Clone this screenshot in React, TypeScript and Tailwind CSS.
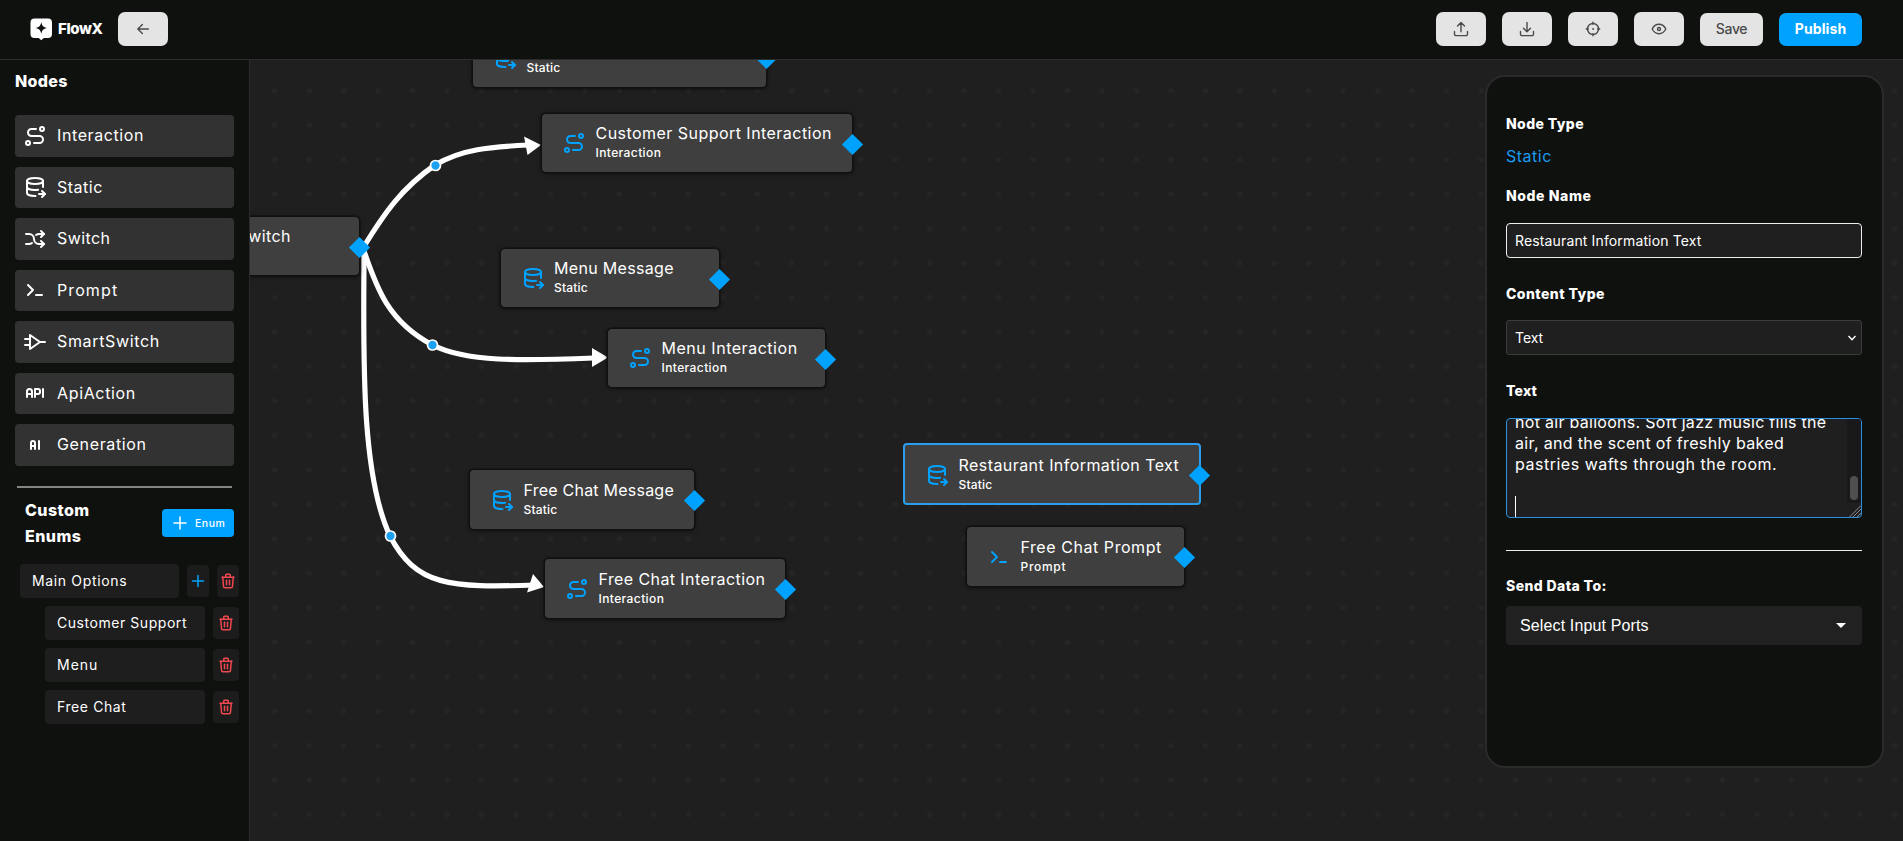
import type { ReactNode } from "react";
import type { IconType } from "react-icons";
import {
  TbAi,
  TbApi,
  TbArrowsShuffle,
  TbDatabaseExport,
  TbLogicBuffer,
  TbPrompt,
  TbRoute,
  TbTrash,
} from "react-icons/tb";

const palette: { label: string; icon: IconType; tracking: string }[] = [
  { label: "Interaction", icon: TbRoute, tracking: "tracking-[0.6px]" },
  { label: "Static", icon: TbDatabaseExport, tracking: "tracking-[0.5px]" },
  { label: "Switch", icon: TbArrowsShuffle, tracking: "tracking-[0.4px]" },
  { label: "Prompt", icon: TbPrompt, tracking: "tracking-[1.1px]" },
  { label: "SmartSwitch", icon: TbLogicBuffer, tracking: "tracking-[0.65px]" },
  { label: "ApiAction", icon: TbApi, tracking: "tracking-[0.65px]" },
  { label: "Generation", icon: TbAi, tracking: "tracking-[0.65px]" },
];

const enumOptions = [
  { label: "Customer Support", tracking: "tracking-[0.55px]" },
  { label: "Menu", tracking: "tracking-[1px]" },
  { label: "Free Chat", tracking: "tracking-[0.6px]" },
];

type FlowNode = {
  place: string;
  title: string;
  kind: string;
  icon: IconType;
  tracking: string;
  kindTracking: string;
  selected?: boolean;
};

const nodes: FlowNode[] = [
  { place: "left-[223px] -top-[32px] w-[293px]", title: "Customer Support Message", kind: "Static", icon: TbDatabaseExport, tracking: "tracking-[0.4px]", kindTracking: "tracking-[0.2px]" },
  { place: "left-[292px] top-[53.500px] w-[309.500px]", title: "Customer Support Interaction", kind: "Interaction", icon: TbRoute, tracking: "tracking-[0.46px]", kindTracking: "tracking-[0.4px]" },
  { place: "-left-[66px] top-[156.500px] w-[175px]", title: "Switch", kind: "", icon: TbArrowsShuffle, tracking: "tracking-[0.4px]", kindTracking: "" },
  { place: "left-[250.500px] top-[188.500px] w-[218px]", title: "Menu Message", kind: "Static", icon: TbDatabaseExport, tracking: "tracking-[0.32px]", kindTracking: "tracking-[0.2px]" },
  { place: "left-[358px] top-[268.500px] w-[217px]", title: "Menu Interaction", kind: "Interaction", icon: TbRoute, tracking: "tracking-[0.53px]", kindTracking: "tracking-[0.4px]" },
  { place: "left-[220px] top-[410px] w-[224px]", title: "Free Chat Message", kind: "Static", icon: TbDatabaseExport, tracking: "tracking-[0.23px]", kindTracking: "tracking-[0.2px]" },
  { place: "left-[295px] top-[499px] w-[240px]", title: "Free Chat Interaction", kind: "Interaction", icon: TbRoute, tracking: "tracking-[0.41px]", kindTracking: "tracking-[0.4px]" },
  { place: "left-[655px] top-[385px] w-[298px]", title: "Restaurant Information Text", kind: "Static", icon: TbDatabaseExport, tracking: "tracking-[0.44px]", kindTracking: "tracking-[0.2px]", selected: true },
  { place: "left-[717px] top-[467px] w-[217px]", title: "Free Chat Prompt", kind: "Prompt", icon: TbPrompt, tracking: "tracking-[0.56px]", kindTracking: "tracking-[0.7px]" },
];

function GlyphIcon({ children, size = 16 }: { children: ReactNode; size?: number }) {
  return (
    <svg width={size} height={size} viewBox="0 0 16 16" fill="none" stroke="currentColor" strokeWidth="1.4" strokeLinecap="round" strokeLinejoin="round">
      {children}
    </svg>
  );
}

function IconButton({ children }: { children: ReactNode }) {
  return (
    <button className="flex h-[34px] w-[50px] items-center justify-center rounded-[7px] bg-[#e4e4e4] text-[#4a4a4a]">
      {children}
    </button>
  );
}

function Header() {
  return (
    <header className="flex h-[60px] shrink-0 items-center border-b border-[#2c2c2c] bg-[#0f110f] pr-[41px] pl-[30px]">
      <svg width="23" height="23" viewBox="0 0 23 23">
        <path d="M4.5 0.5h13.5a4 4 0 0 1 4 4v11.5a4 4 0 0 1-4 4h-4.2L11.3 22.3 8.7 20H4.5a4 4 0 0 1-4-4V4.5a4 4 0 0 1 4-4Z" fill="#fff" />
        <path d="M11.300 4c.9 4.200 1.800 5.100 6 6-4.200.9-5.100 1.800-6 6-.9-4.200-1.800-5.100-6-6 4.200-.9 5.100-1.800 6-6Z" fill="#0f110f" />
      </svg>
      <span className="ml-[5px] w-[60px] text-[15px] font-extrabold tracking-[-0.4px] text-white">FlowX</span>
      <div className="-mt-[2px]">
        <IconButton>
          <GlyphIcon>
            <path d="M13.400 8H3M7.400 3.500 2.800 8l4.600 4.500" />
          </GlyphIcon>
        </IconButton>
      </div>
      <div className="-mt-[2px] ml-auto flex items-center gap-4">
        <IconButton>
          <GlyphIcon>
            <path d="M8 10.700V1.800M4.500 5 8 1.500 11.500 5M1.500 10.500v2.700a1.400 1.400 0 0 0 1.400 1.400h10.200a1.400 1.400 0 0 0 1.400-1.400v-2.700" />
          </GlyphIcon>
        </IconButton>
        <IconButton>
          <GlyphIcon>
            <path d="M8 1.500v9M4.500 7.200 8 10.700l3.500-3.500M1.500 10.500v2.700a1.400 1.400 0 0 0 1.400 1.400h10.200a1.400 1.400 0 0 0 1.400-1.400v-2.700" />
          </GlyphIcon>
        </IconButton>
        <IconButton>
          <GlyphIcon>
            <circle cx="8" cy="8" r="5.500" />
            <path d="M8 1.300v2M8 12.700v2M1.300 8h2M12.700 8h2" />
            <circle cx="8" cy="8" r="0.500" fill="currentColor" strokeWidth="0.800" />
          </GlyphIcon>
        </IconButton>
        <IconButton>
          <GlyphIcon>
            <path d="M1.200 8C2.700 5 5.200 3.300 8 3.300S13.300 5 14.800 8C13.300 11 10.800 12.700 8 12.700S2.700 11 1.200 8Z" />
            <circle cx="8" cy="8" r="1.500" />
          </GlyphIcon>
        </IconButton>
        <button className="mt-px flex h-[33px] w-[63px] items-center justify-center rounded-[7px] bg-[#e4e4e4] pb-px text-[14px] font-medium tracking-[-0.3px] text-[#4a4a4a]">
          Save
        </button>
        <button className="mt-px flex h-[33px] w-[83px] items-center justify-center rounded-[7px] bg-[#00a2ff] pb-px text-[14px] font-bold tracking-[0.1px] text-white">
          Publish
        </button>
      </div>
    </header>
  );
}

function DeleteButton({ width }: { width: "wide" | "narrow" }) {
  return (
    <button className={`flex h-8 items-center justify-center rounded bg-[#1c1c1c] text-[#f0484f] ${width === "wide" ? "w-[26px]" : "w-[22px]"}`}>
      <TbTrash size={18} />
    </button>
  );
}

function Sidebar() {
  return (
    <aside className="flex w-[250px] shrink-0 flex-col border-r border-[#2c2c2c] bg-[#0f110f] text-white">
      <h2 className="mt-[9px] ml-[15px] text-[16px] leading-6 font-extrabold tracking-[0.3px]">Nodes</h2>
      <div className="mt-[22px] ml-[15px] flex w-[219px] flex-col gap-[10px]">
        {palette.map(({ label, icon: Icon, tracking }) => (
          <div key={label} className="flex h-[41.500px] items-center rounded bg-[#323232] pl-2">
            <Icon size={24} />
            <span className={`-mt-px ml-[10px] text-[16px] ${tracking}`}>{label}</span>
          </div>
        ))}
      </div>
      <div className="mt-[20px] ml-[17px] h-[2px] w-[215px] bg-[#858585]" />
      <div className="mt-[9px] ml-[25px] flex w-[209px] items-center justify-between">
        <h2 className="w-[90px] text-[16px] leading-[26px] font-extrabold tracking-[0.45px]">Custom Enums</h2>
        <button className="mt-px flex h-7 w-[72px] items-center rounded bg-[#00a2ff] pl-[10px]">
          <svg width="16" height="16" viewBox="0 0 16 16" stroke="#fff" strokeWidth="1.500" strokeLinecap="round">
            <path d="M8 2v12M2 8h12" />
          </svg>
          <span className="mt-px ml-[7px] text-[10.500px] font-medium tracking-[0.5px]">Enum</span>
        </button>
      </div>
      <div className="mt-[15px] ml-5 flex items-center gap-2">
        <div className="flex h-[34px] w-[159px] items-center rounded bg-[#1e1e1e] pl-[12px] text-[14px] tracking-[0.65px]">Main Options</div>
        <button className="flex h-8 w-[22px] items-center justify-center rounded bg-[#1c1c1c]">
          <svg width="14" height="14" viewBox="0 0 14 14" stroke="#00a2ff" strokeWidth="1.500" strokeLinecap="round">
            <path d="M7 1.500v11M1.500 7h11" />
          </svg>
        </button>
        <DeleteButton width="narrow" />
      </div>
      <div className="mt-2 ml-[45px] flex flex-col gap-2">
        {enumOptions.map(({ label, tracking }) => (
          <div key={label} className="flex items-center gap-2">
            <div className={`flex h-[34px] w-[160px] items-center rounded bg-[#1e1e1e] pl-[12px] text-[14px] ${tracking}`}>{label}</div>
            <DeleteButton width="wide" />
          </div>
        ))}
      </div>
    </aside>
  );
}

function NodeCard({ node }: { node: FlowNode }) {
  const Icon = node.icon;
  return (
    <div
      className={`absolute flex items-center rounded-[4px] bg-[#3f3f3f] pl-5 ${node.place} ${
        node.selected ? "-translate-x-[2px] -translate-y-[2px] h-[62px] border-2 border-[#2a9df0]" : "h-[58.500px] shadow-[0_0_0_1.500px_#101010,0_1px_4px_1px_rgba(0,0,0,0.500)]"
      }`}
    >
      <Icon size={24} className="mt-px shrink-0 text-[#00a2ff]" />
      <div className="-mt-px ml-[9.500px] whitespace-nowrap text-white">
        <div className={`text-[16px] leading-[21px] ${node.tracking}`}>{node.title}</div>
        <div className={`h-[17px] text-[12px] leading-[17px] font-medium ${node.kindTracking}`}>{node.kind}</div>
      </div>
      <div className="absolute top-1/2 -right-[8px] mt-[-6px] h-[15px] w-[15px] rotate-45 bg-[#00a2ff]" />
    </div>
  );
}

function Edges() {
  return (
    <svg className="absolute inset-0" width="1653" height="781" viewBox="250 60 1653 781" fill="none" stroke="#fff" strokeWidth="5.200">
      <path d="M363 248C385 212 402 188 435 165C462 149 490 147 528 145" />
      <path d="M363 248C377 290 389 322 432.500 345C466 362 520 361 594 358" />
      <path d="M364 248C364 340 359 470 390 536C416 586 450 588 535 585" />
      <g fill="#fff" stroke="none">
        <path d="M524 136.500 541 145 527.500 155Z" />
        <path d="M592 348 608 357.500 592 367Z" />
        <path d="M533 574 544 587 527 592.500Z" />
      </g>
      <g fill="#1ba1f2" strokeWidth="1.700">
        <circle cx="435.500" cy="165.500" r="5" />
        <circle cx="432.500" cy="345" r="5" />
        <circle cx="390.500" cy="536" r="5" />
      </g>
    </svg>
  );
}

function Label({ children, className }: { children: ReactNode; className: string }) {
  return <div className={`text-[14px] leading-[18px] font-extrabold ${className}`}>{children}</div>;
}

function Inspector() {
  return (
    <section className="absolute top-[15px] left-[1235px] flex h-[693px] w-[399px] flex-col rounded-[20px] border-2 border-[#2a2a2a] bg-[#0f110f] pr-[20px] pl-[19px] text-white">
      <Label className="mt-[38px] tracking-[0.4px]">Node Type</Label>
      <div className="mt-[12px] text-[16px] leading-[22px] tracking-[0.5px] text-[#1b9cf0]">Static</div>
      <Label className="mt-[20px] tracking-[0.6px]">Node Name</Label>
      <div className="mt-[18px] flex h-[35px] items-center rounded-[4px] border border-[#eee] bg-[#1f1f1f] pl-[8px] text-[14px] tracking-[0.140px]">
        Restaurant Information Text
      </div>
      <Label className="mt-[27px] tracking-[0.450px]">Content Type</Label>
      <div className="mt-[17px] flex h-[35px] items-center justify-between rounded-[3px] border border-[#3c3c3c] bg-[#1f1f1f] pr-[5px] pl-[8px] text-[14px] tracking-[-0.05px]">
        Text
        <svg width="8" height="6" viewBox="0 0 8 6" fill="none" stroke="#fff" strokeWidth="1.500">
          <path d="M0.500 1 4 4.700 7.500 1" />
        </svg>
      </div>
      <Label className="mt-[27px] tracking-[0.2px]">Text</Label>
      <div className="relative mt-[18px] h-[100px] shrink-0 overflow-hidden rounded-[4px] border border-[#2a8fe0] bg-[#1f1f1f] pl-[8px]">
        <div className="-mt-[7px] text-[16px] leading-[21px] whitespace-nowrap">
          <p className="tracking-[0.290px]">hot air balloons. Soft jazz music fills the</p>
          <p className="tracking-[0.340px]">air, and the scent of freshly baked</p>
          <p className="tracking-[0.510px]">pastries wafts through the room.</p>
        </div>
        <div className="mt-[21px] h-[22px] w-px bg-white" />
        <div className="absolute top-0 right-0 h-[84px] w-[14px] bg-[#191919]">
          <div className="mt-[57px] ml-[3px] h-[24px] w-[8px] rounded-[4px] bg-[#4f4f4f]" />
        </div>
        <svg className="absolute right-0 bottom-0" width="12" height="12" viewBox="0 0 12 12" stroke="#9a9a9a" strokeWidth="0.900">
          <path d="M0.500 12 12 0.500M4 12 12 4M8 12 12 8" />
        </svg>
      </div>
      <div className="mt-[32px] h-px shrink-0 bg-[#eee]" />
      <Label className="mt-[26px] tracking-[0.4px]">Send Data To:</Label>
      <div className="mt-[11px] flex h-[39px] items-center justify-between rounded-[4px] bg-[#212121] pr-[16px] pl-[14px] font-['Liberation_Sans'] text-[16px] tracking-[0.130px]">
        Select Input Ports
        <svg width="10" height="5" viewBox="0 0 10 5" fill="#fff">
          <path d="M0 0h10L5 5Z" />
        </svg>
      </div>
    </section>
  );
}

export default function App() {
  return (
    <div className="flex h-[841px] w-full flex-col overflow-hidden bg-[#0f110f] font-[Inter,sans-serif]">
      <Header />
      <div className="flex min-h-0 flex-1">
        <Sidebar />
        <main className="relative flex-1 overflow-hidden bg-[#1f1f1f] bg-[radial-gradient(circle,#262626_0,#252525_2px,transparent_3.500px)] bg-[size:34.470px_34.470px] bg-[position:7.500px_13.500px]">
          <Edges />
          {nodes.map((node) => (
            <NodeCard key={node.place} node={node} />
          ))}
          <Inspector />
        </main>
      </div>
    </div>
  );
}
